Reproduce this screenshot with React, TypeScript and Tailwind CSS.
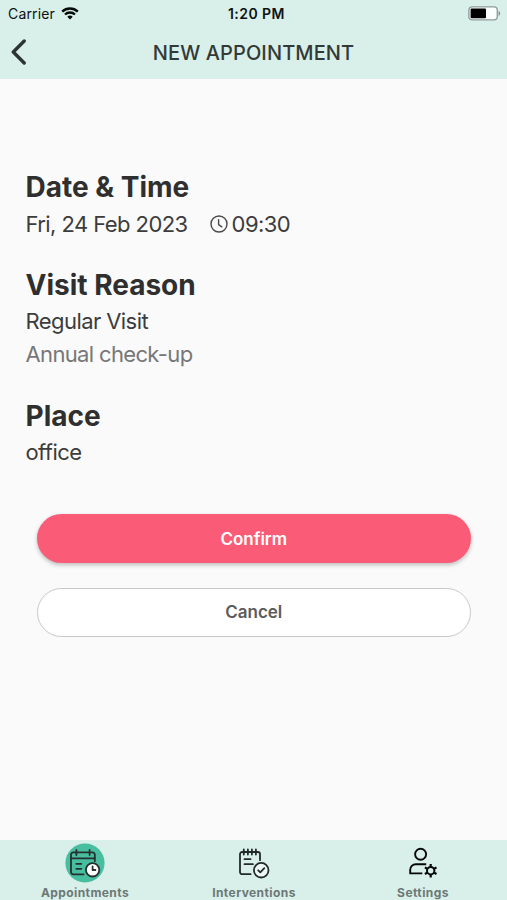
import React, { useState } from 'react';
import type { ReactNode } from 'react';

type Tab = 'appointments' | 'interventions' | 'settings';

const WifiIcon = () => (
  <svg className="h-[13px] w-[18px]" viewBox="0 0 18 13" fill="none">
    <path d="M1.2 4.6a11.3 11.3 0 0 1 15.6 0" stroke="#060a09" strokeWidth="2.5" />
    <path d="M4 7.5a7.2 7.2 0 0 1 10 0" stroke="#060a09" strokeWidth="2.3" />
    <path d="M9 12.4 6.3 9.7a3.9 3.9 0 0 1 5.4 0z" fill="#060a09" />
  </svg>
);

const BatteryIcon = () => (
  <svg className="h-[15px] w-[33px]" viewBox="0 0 33 15" fill="none">
    <rect x="0.9" y="0.9" width="28.4" height="13" rx="3.4" fill="#fbfffe" stroke="#8f9f9b" strokeWidth="1.4" />
    <rect x="2.6" y="2.6" width="15.4" height="9.6" rx="1" fill="#000" />
    <path d="M30.6 5c2 .8 2 4 0 4.8z" fill="#7d8c88" />
  </svg>
);

const ClockIcon = () => (
  <svg className="h-[18px] w-[18px]" viewBox="0 0 18 18" fill="none" stroke="#4a4a4a" strokeLinecap="round" strokeLinejoin="round">
    <circle cx="9" cy="9" r="8" strokeWidth="1.4" />
    <path d="M8.6 4.6v5l3.2 2.2" strokeWidth="1.4" />
  </svg>
);

const AppointmentsIcon = () => (
  <svg className="h-10 w-10" viewBox="0 0 40 40" fill="none" stroke="#26302e" strokeWidth="1.8" strokeLinecap="round" strokeLinejoin="round">
    <circle cx="20" cy="20" r="19.6" fill="#47bea0" stroke="none" />
    <path d="M18.6 31.3H8.2a2.2 2.2 0 0 1-2.2-2.2V11.6a2.2 2.2 0 0 1 2.2-2.2h19.4a2.2 2.2 0 0 1 2.2 2.2v6.6" />
    <path d="M6 15.3h23.8M11.4 6.8v5.2M24.6 6.8v5.2M11.3 20.8h5M11.3 25.8h5" />
    <circle cx="27.6" cy="26.8" r="6.7" fill="#fff" />
    <path d="M27.6 23.4v3.6h2.8" />
  </svg>
);

const InterventionsIcon = () => (
  <svg className="h-10 w-10" viewBox="0 0 40 40" fill="none" stroke="#222b29" strokeWidth="1.8" strokeLinecap="round" strokeLinejoin="round">
    <path d="M16.6 31.2H8.2A2.2 2.2 0 0 1 6 29V11.2A2.2 2.2 0 0 1 8.2 9h15.6a2.2 2.2 0 0 1 2.2 2.2v6" />
    <path d="M9.8 6.5v5M13.9 6.5v5M17.9 6.5v5M21.9 6.5v5M10.5 16.2h6M10.5 21.2h8.4" />
    <circle cx="27.2" cy="27.2" r="7.3" fill="#edf7f4" />
    <path d="m24.2 27.3 2.1 2.1 4-4.2" />
  </svg>
);

const SettingsIcon = () => (
  <svg className="h-10 w-10" viewBox="0 0 40 40" fill="none" stroke="#050807" strokeWidth="1.9" strokeLinejoin="round">
    <circle cx="17.6" cy="11.2" r="5.5" />
    <path d="M19.3 30.4H7.2v-3.6a5.6 5.6 0 0 1 5.6-5.6h10.4" />
    <circle cx="27.7" cy="27.7" r="3.7" strokeWidth="2" />
    <path d="M27.7 21v2.8M27.7 31.6v2.8M21.9 24.35l2.4 1.4M31.1 29.65l2.4 1.4M33.5 24.35l-2.4 1.4M24.3 29.65l-2.4 1.4" strokeWidth="2.2" />
  </svg>
);

interface SectionProps {
  title: string;
  children: ReactNode;
}

const Section = ({ title, children }: SectionProps) => (
  <section>
    <h2 className="h-10 text-[28px] leading-10 font-bold tracking-normal text-[#2f2f2f]">{title}</h2>
    {children}
  </section>
);

const tabs: { id: Tab; label: string; icon: ReactNode }[] = [
  { id: 'appointments', label: 'Appointments', icon: <AppointmentsIcon /> },
  { id: 'interventions', label: 'Interventions', icon: <InterventionsIcon /> },
  { id: 'settings', label: 'Settings', icon: <SettingsIcon /> },
];

export default function App() {
  const [activeTab, setActiveTab] = useState<Tab>('appointments');

  return (
    <div className="flex h-[900px] w-[507px] flex-col overflow-hidden bg-[#fafafa] font-['Inter',sans-serif] whitespace-nowrap text-[#3c3c3c]">
      <header className="h-[79px] shrink-0 bg-[#d9efe9]">
        <div className="grid h-[27px] grid-cols-3 items-center pr-1.5 pl-2 text-[#0c1211]">
          <div className="flex items-center gap-1.5 text-sm">
            <span className="tracking-[0.15px]">Carrier</span>
            <WifiIcon />
          </div>
          <span className="pl-1 text-center text-sm font-semibold tracking-[0.45px]">1:20 PM</span>
          <div className="flex justify-end">
            <BatteryIcon />
          </div>
        </div>
        <div className="grid h-[51px] grid-cols-[40px_1fr_40px] items-center">
          <button className="pb-0.5 pl-[11px]" aria-label="Back">
            <svg className="h-[26px] w-4" viewBox="0 0 16 26" fill="none" stroke="#2d3533" strokeWidth="3.4" strokeLinecap="round" strokeLinejoin="round">
              <path d="M13.2 2 2.3 13l10.9 11" />
            </svg>
          </button>
          <h1 className="text-center text-xl font-medium tracking-[0.1px] text-[#323a38]">NEW APPOINTMENT</h1>
        </div>
      </header>

      <main className="flex-1 pt-[88px] pr-[25px] pl-[25.5px]">
        <div className="flex flex-col gap-[21px] text-[22px] leading-[33px] tracking-[-0.57px]">
          <Section title="Date & Time">
            <div className="flex h-[37px] items-center pb-[3px]">
              <span>Fri, 24 Feb 2023</span>
              <span className="ml-[22px] flex items-center gap-1">
                <ClockIcon />
                09:30
              </span>
            </div>
          </Section>
          <Section title="Visit Reason">
            <p>Regular Visit</p>
            <p className="h-[37px] tracking-[-0.65px] text-[#777]">Annual check-up</p>
          </Section>
          <Section title="Place">
            <p>office</p>
          </Section>
        </div>

        <div className="mt-[45px] flex flex-col gap-[25px] px-[11px] text-[17px] font-semibold">
          <button className="h-[49px] rounded-full bg-[#fa5c77] pt-0.5 text-white shadow-[0_2px_4px_rgba(0,0,0,0.25)]">Confirm</button>
          <button className="h-[49px] rounded-full border border-[#c9c9c9] bg-white text-[#5c5c5c]">Cancel</button>
        </div>
      </main>

      <nav className="grid h-[60px] shrink-0 grid-cols-3 bg-[#d9efe9]">
        {tabs.map(tab => (
          <button
            key={tab.id}
            onClick={() => setActiveTab(tab.id)}
            aria-current={activeTab === tab.id ? 'page' : undefined}
            className="flex flex-col items-center pt-[3px] text-[#6c7875]"
          >
            {tab.icon}
            <span className="pt-px pl-px text-xs leading-[18px] font-bold tracking-[0.42px]">{tab.label}</span>
          </button>
        ))}
      </nav>
    </div>
  );
}
